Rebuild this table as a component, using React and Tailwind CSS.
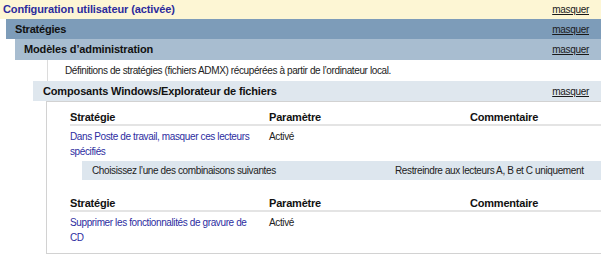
import React from 'react';

const font = { fontFamily: '"Liberation Sans", Arial, sans-serif' };

function HideLink() {
  return <span className="text-[10px] font-normal tracking-[-0.3px] text-[#1a1a1a] underline">masquer</span>;
}

function PolicyTable({ lines, value }) {
  return (
    <div className="pl-[23px]">
      <div className="grid grid-cols-[199px_201px_1fr] h-[17px] items-center border-b-2 border-[#e4e4e4] text-[11px] font-bold tracking-[-0.2px] text-[#111]">
        <span>Stratégie</span>
        <span>Paramètre</span>
        <span>Commentaire</span>
      </div>
      <div className="grid grid-cols-[199px_201px_1fr] pt-[3px] leading-[15px]">
        <span className="text-[#2d2d9f]">
          {lines.map((l) => (
            <span key={l} className="block whitespace-nowrap">{l}</span>
          ))}
        </span>
        <span className="text-[#222]">{value}</span>
        <span />
      </div>
    </div>
  );
}

export default function App() {
  return (
    <div style={font} className="w-[601px] h-[258px] overflow-hidden bg-white text-[10px] tracking-[-0.38px] text-[#222]">
      {/* top level */}
      <div className="h-[19px] bg-[#fdf6d4] flex items-center justify-between pl-[3px] pr-[12px]">
        <span className="text-[11px] font-bold tracking-[-0.1px] text-[#2b2b9d]">Configuration utilisateur (activée)</span>
        <HideLink />
      </div>

      <div className="ml-[6px]">
        <div className="h-[20px] bg-[#7d9cb9] flex items-center justify-between pl-[9px] pr-[12px]">
          <span className="text-[11px] font-bold tracking-[-0.2px] text-[#111]">Stratégies</span>
          <HideLink />
        </div>

        <div className="ml-[9px]">
          <div className="h-[21px] bg-[#a8bdd0] flex items-center justify-between pl-[9px] pr-[12px]">
            <span className="text-[11px] font-bold tracking-[-0.15px] text-[#111]">Modèles d’administration</span>
            <HideLink />
          </div>

          <div className="ml-[32px] h-[21px] border-l border-[#dcdcdc] flex items-center pl-[17px]">
            Définitions de stratégies (fichiers ADMX) récupérées à partir de l’ordinateur local.
          </div>

          <div className="ml-[18px]">
            <div className="h-[20px] bg-[#dfe7ee] flex items-center justify-between pl-[10px] pr-[12px]">
              <span className="text-[11px] font-bold tracking-[-0.15px] text-[#111]">Composants Windows/Explorateur de fichiers</span>
              <HideLink />
            </div>

            <div className="ml-[13px] border border-r-0 border-[#d2d2d2] pt-[7px] pb-[8px]">
              <PolicyTable
                lines={['Dans Poste de travail, masquer ces lecteurs', 'spécifiés']}
                value="Activé"
              />
              <div className="ml-[35px] mt-[2px] h-[19px] bg-[#dde6ee] grid grid-cols-[303px_1fr] items-center pl-[10px]">
                <span>Choisissez l’une des combinaisons suivantes</span>
                <span>Restreindre aux lecteurs A, B et C uniquement</span>
              </div>
              <div className="mt-[15px]">
                <PolicyTable
                  lines={['Supprimer les fonctionnalités de gravure de', 'CD']}
                  value="Activé"
                />
              </div>
            </div>
          </div>
        </div>
      </div>
    </div>
  );
}
